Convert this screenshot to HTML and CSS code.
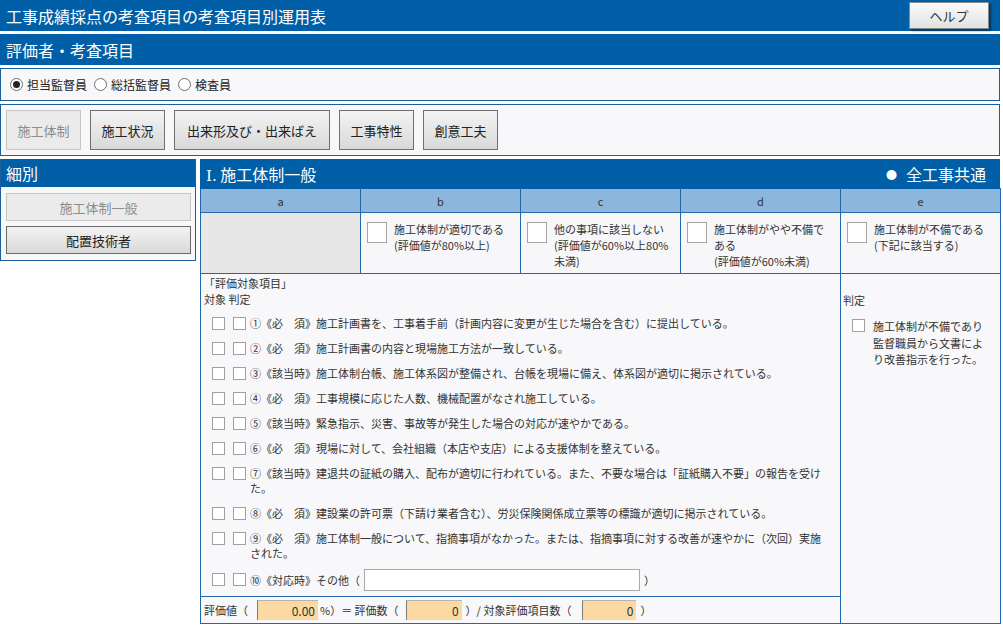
FILE: index.html
```html
<!DOCTYPE html>
<html lang="ja">
<head>
<meta charset="utf-8">
<title>工事成績採点の考査項目の考査項目別運用表</title>
<link rel="stylesheet" href="styles.css">
</head>
<body>
<div class="page">
  <header class="topbar">
    <h1 class="title">工事成績採点の考査項目の考査項目別運用表</h1>
    <button class="help" type="button">ヘルプ</button>
  </header>

  <div class="bar">評価者・考査項目</div>

  <div class="panel radios">
    <label class="radio"><span class="rb on"></span>担当監督員</label>
    <label class="radio"><span class="rb"></span>総括監督員</label>
    <label class="radio"><span class="rb"></span>検査員</label>
  </div>

  <div class="panel tabs">
    <button class="btn disabled" type="button">施工体制</button>
    <button class="btn" type="button">施工状況</button>
    <button class="btn wide" type="button">出来形及び・出来ばえ</button>
    <button class="btn" type="button">工事特性</button>
    <button class="btn" type="button">創意工夫</button>
  </div>

  <div class="main">
    <aside class="side">
      <div class="side-head">細別</div>
      <div class="side-body">
        <button class="sbtn disabled" type="button">施工体制一般</button>
        <button class="sbtn" type="button">配置技術者</button>
      </div>
    </aside>

    <section class="sheet">
      <div class="sheet-head">
        <span class="sheet-title"><span class="roman">Ⅰ.</span> 施工体制一般</span>
        <span class="sheet-tag"><span class="dot">●</span>全工事共通</span>
      </div>
      <table class="grid">
        <colgroup><col class="c"><col class="c"><col class="c"><col class="c"><col class="c"></colgroup>
        <thead>
          <tr><th>a</th><th>b</th><th>c</th><th>d</th><th>e</th></tr>
        </thead>
        <tbody>
          <tr class="levels">
            <td class="blank"></td>
            <td><div class="level"><span class="bigbox"></span><p>施工体制が適切である<br>(評価値が80%以上)</p></div></td>
            <td><div class="level"><span class="bigbox"></span><p>他の事項に該当しない<br>(評価値が60%以上80%未満)</p></div></td>
            <td><div class="level"><span class="bigbox"></span><p>施工体制がやや不備である<br>(評価値が60%未満)</p></div></td>
            <td><div class="level"><span class="bigbox"></span><p>施工体制が不備である<br>(下記に該当する)</p></div></td>
          </tr>
          <tr class="detail">
            <td colspan="4" class="items-cell">
              <div class="items-wrap">
                <div class="items">
                  <p class="cap">「評価対象項目」</p>
                  <p class="cap">対象 判定</p>
                  <ul class="list">
                    <li class="item"><span class="cb"></span><span class="cb"></span><span class="txt">①《必　須》施工計画書を、工事着手前（計画内容に変更が生じた場合を含む）に提出している。</span></li>
                    <li class="item"><span class="cb"></span><span class="cb"></span><span class="txt">②《必　須》施工計画書の内容と現場施工方法が一致している。</span></li>
                    <li class="item"><span class="cb"></span><span class="cb"></span><span class="txt">③《該当時》施工体制台帳、施工体系図が整備され、台帳を現場に備え、体系図が適切に掲示されている。</span></li>
                    <li class="item"><span class="cb"></span><span class="cb"></span><span class="txt">④《必　須》工事規模に応じた人数、機械配置がなされ施工している。</span></li>
                    <li class="item"><span class="cb"></span><span class="cb"></span><span class="txt">⑤《該当時》緊急指示、災害、事故等が発生した場合の対応が速やかである。</span></li>
                    <li class="item"><span class="cb"></span><span class="cb"></span><span class="txt">⑥《必　須》現場に対して、会社組織（本店や支店）による支援体制を整えている。</span></li>
                    <li class="item"><span class="cb"></span><span class="cb"></span><span class="txt">⑦《該当時》建退共の証紙の購入、配布が適切に行われている。また、不要な場合は「証紙購入不要」の報告を受けた。</span></li>
                    <li class="item"><span class="cb"></span><span class="cb"></span><span class="txt">⑧《必　須》建設業の許可票（下請け業者含む）、労災保険関係成立票等の標識が適切に掲示されている。</span></li>
                    <li class="item"><span class="cb"></span><span class="cb"></span><span class="txt">⑨《必　須》施工体制一般について、指摘事項がなかった。または、指摘事項に対する改善が速やかに（次回）実施された。</span></li>
                    <li class="item other"><span class="cb"></span><span class="cb"></span><span class="txt">⑩《対応時》その他（<span class="field"></span>）</span></li>
                  </ul>
                </div>
                <div class="score">
                  <span>評価値（</span><span class="num n1">0.00</span><span>%）＝ 評価数（</span><span class="num n2">0</span><span>）/ 対象評価項目数（</span><span class="num n3">0</span><span>）</span>
                </div>
              </div>
            </td>
            <td class="judge-cell">
              <p class="judge-label">判定</p>
              <div class="judge"><span class="cb"></span><p>施工体制が不備であり監督職員から文書により改善指示を行った。</p></div>
            </td>
          </tr>
        </tbody>
      </table>
    </section>
  </div>
</div>
</body>
</html>
```

FILE: styles.css
```css
* { box-sizing: border-box; margin: 0; padding: 0; }

body {
  font-family: "Noto Sans CJK JP", "Noto Sans", sans-serif;
  color: #333;
  background: #fff;
}

.page {
  width: 1000px;
  display: flex;
  flex-direction: column;
  gap: 3px;
}

/* top bars */
.topbar {
  height: 31px;
  background: #005fa7;
  display: flex;
  align-items: center;
  justify-content: space-between;
  padding: 0 11px 0 6px;
}
.title {
  font-size: 16px;
  font-weight: normal;
  color: #fff;
}
.help {
  width: 80px;
  height: 27px;
  font: 13px "Noto Sans CJK JP", sans-serif;
  color: #333;
  background: linear-gradient(#fbfbfb, #e2e2e2);
  border: 1px solid #8a8a8a;
  box-shadow: 2px 2px 2px rgba(0, 0, 0, 0.45);
}

.bar {
  height: 31px;
  background: #005fa7;
  color: #fff;
  font-size: 16px;
  display: flex;
  align-items: center;
  padding-left: 6px;
}

.panel {
  border: 1px solid #1d5e9c;
  background: #f8f8fa;
}

/* radios */
.radios {
  height: 33px;
  display: flex;
  align-items: center;
  padding-left: 9px;
  font-size: 12px;
  color: #222;
}
.radio {
  display: flex;
  align-items: center;
  gap: 4px;
  margin-right: 7px;
}
.rb {
  width: 13px;
  height: 13px;
  border-radius: 50%;
  border: 1px solid #6f6f6f;
  background: #fff;
  display: flex;
  align-items: center;
  justify-content: center;
}
.rb.on::after {
  content: "";
  width: 7px;
  height: 7px;
  border-radius: 50%;
  background: #222;
}

/* tabs */
.tabs {
  height: 52px;
  display: flex;
  align-items: center;
  gap: 9px;
  padding: 0 5px;
}
.btn {
  width: 75px;
  height: 40px;
  font: 13px "Noto Sans CJK JP", sans-serif;
  color: #222;
  background: linear-gradient(#f3f3f3, #d9d9d9);
  border: 1px solid #707070;
}
.btn.wide { width: 156px; }
.btn.disabled, .sbtn.disabled {
  color: #8c8c8c;
  background: #ebebeb;
  border-color: #c6c6c6;
}

/* main area */
.main {
  display: flex;
  align-items: flex-start;
  gap: 4px;
}

.side {
  width: 196px;
  border: 1px solid #1d5e9c;
  border-top: none;
  background: #f8f8fa;
}
.side-head {
  height: 28px;
  background: #005fa7;
  color: #fff;
  font-size: 16px;
  display: flex;
  align-items: center;
  padding-left: 5px;
}
.side-body {
  display: flex;
  flex-direction: column;
  gap: 5px;
  padding: 6px 4px 6px 5px;
}
.sbtn {
  width: 185px;
  height: 28px;
  font: 13px "Noto Sans CJK JP", sans-serif;
  color: #222;
  background: linear-gradient(#f3f3f3, #d9d9d9);
  border: 1px solid #6a6a6a;
}

.sheet {
  width: 800px;
}
.sheet-head {
  height: 29px;
  background: #005fa7;
  color: #fff;
  font-size: 16px;
  display: flex;
  align-items: center;
  justify-content: space-between;
  padding: 0 14px 0 6px;
}
.roman {
  font-family: "DejaVu Serif", "Liberation Serif", serif;
  font-size: 15px;
}
.sheet-tag {
  display: flex;
  align-items: center;
}
.dot {
  font-size: 11px;
  margin-right: 9px;
}

.grid {
  width: 800px;
  table-layout: fixed;
  border-collapse: collapse;
  font-size: 11px;
  color: #333;
}
.grid col.c { width: 160px; }
.grid th, .grid td {
  border: 1px solid #2467a8;
  vertical-align: top;
}
.grid thead th {
  height: 24px;
  background: #8db6dc;
  font-weight: normal;
  vertical-align: middle;
  text-align: center;
  color: #333;
}
.grid thead tr th { border-top-color: #005fa7; }

.levels td {
  height: 61px;
  background: #f7f6f8;
}
.levels td.blank { background: #e7e7e7; }
.level {
  display: flex;
  align-items: flex-start;
  gap: 7px;
  padding: 8px 0 0 6px;
  line-height: 16px;
}
.level p { width: 118px; }
.bigbox {
  flex: none;
  width: 20px;
  height: 21px;
  margin-top: 1px;
  background: #fff;
  border: 1px solid #a5a5a5;
}

/* detail row */
.detail td { background: #f8f7f9; }
.items-wrap {
  height: 349px;
  display: flex;
  flex-direction: column;
}
.items {
  flex: 1;
  min-height: 0;
  line-height: 16px;
}
.cap { padding-left: 3px; }
.cap:first-child { padding-top: 1px; }
.list {
  list-style: none;
  margin-top: 4px;
}
.item {
  display: flex;
  align-items: flex-start;
  padding: 5px 0 5px 11px;
  line-height: 15px;
}
.cb {
  flex: none;
  width: 13px;
  height: 13px;
  margin-top: 1px;
  margin-right: 8px;
  background: #fff;
  border: 1px solid #a0a0a0;
}
.item .cb + .cb { margin-right: 4px; }
.txt { width: 578px; }
.other { padding-top: 3px; padding-bottom: 3px; }
.other .txt { display: flex; align-items: center; }
.other .cb { margin-top: 4px; }
.field {
  width: 276px;
  height: 22px;
  margin: 0 4px 0 4px;
  background: #fff;
  border: 1px solid #a9a9a9;
}

.score {
  flex: none;
  height: 27px;
  border-top: 1px solid #2467a8;
  display: flex;
  align-items: center;
  padding-left: 3px;
  white-space: pre;
}
.num {
  height: 20px;
  background: #fad9a2;
  border-left: 1px solid #7b7b7b;
  border-top: 1px solid #b5b5b5;
  text-align: right;
  padding-right: 3px;
  font-size: 12px;
  line-height: 19px;
  color: #333;
}
.n1 { width: 61px; margin: 0 2px 0 9px; }
.n2 { width: 56px; margin: 0 4px 0 7px; }
.n3 { width: 54px; margin: 0 4px 0 11px; }

.judge-cell { line-height: 16px; }
.judge-label {
  padding: 18px 0 0 2px;
}
.judge {
  display: flex;
  align-items: flex-start;
  padding: 10px 0 0 11px;
  line-height: 16.5px;
}
.judge .cb { margin-right: 8px; margin-top: 1px; }
.judge p { width: 116px; }
```
